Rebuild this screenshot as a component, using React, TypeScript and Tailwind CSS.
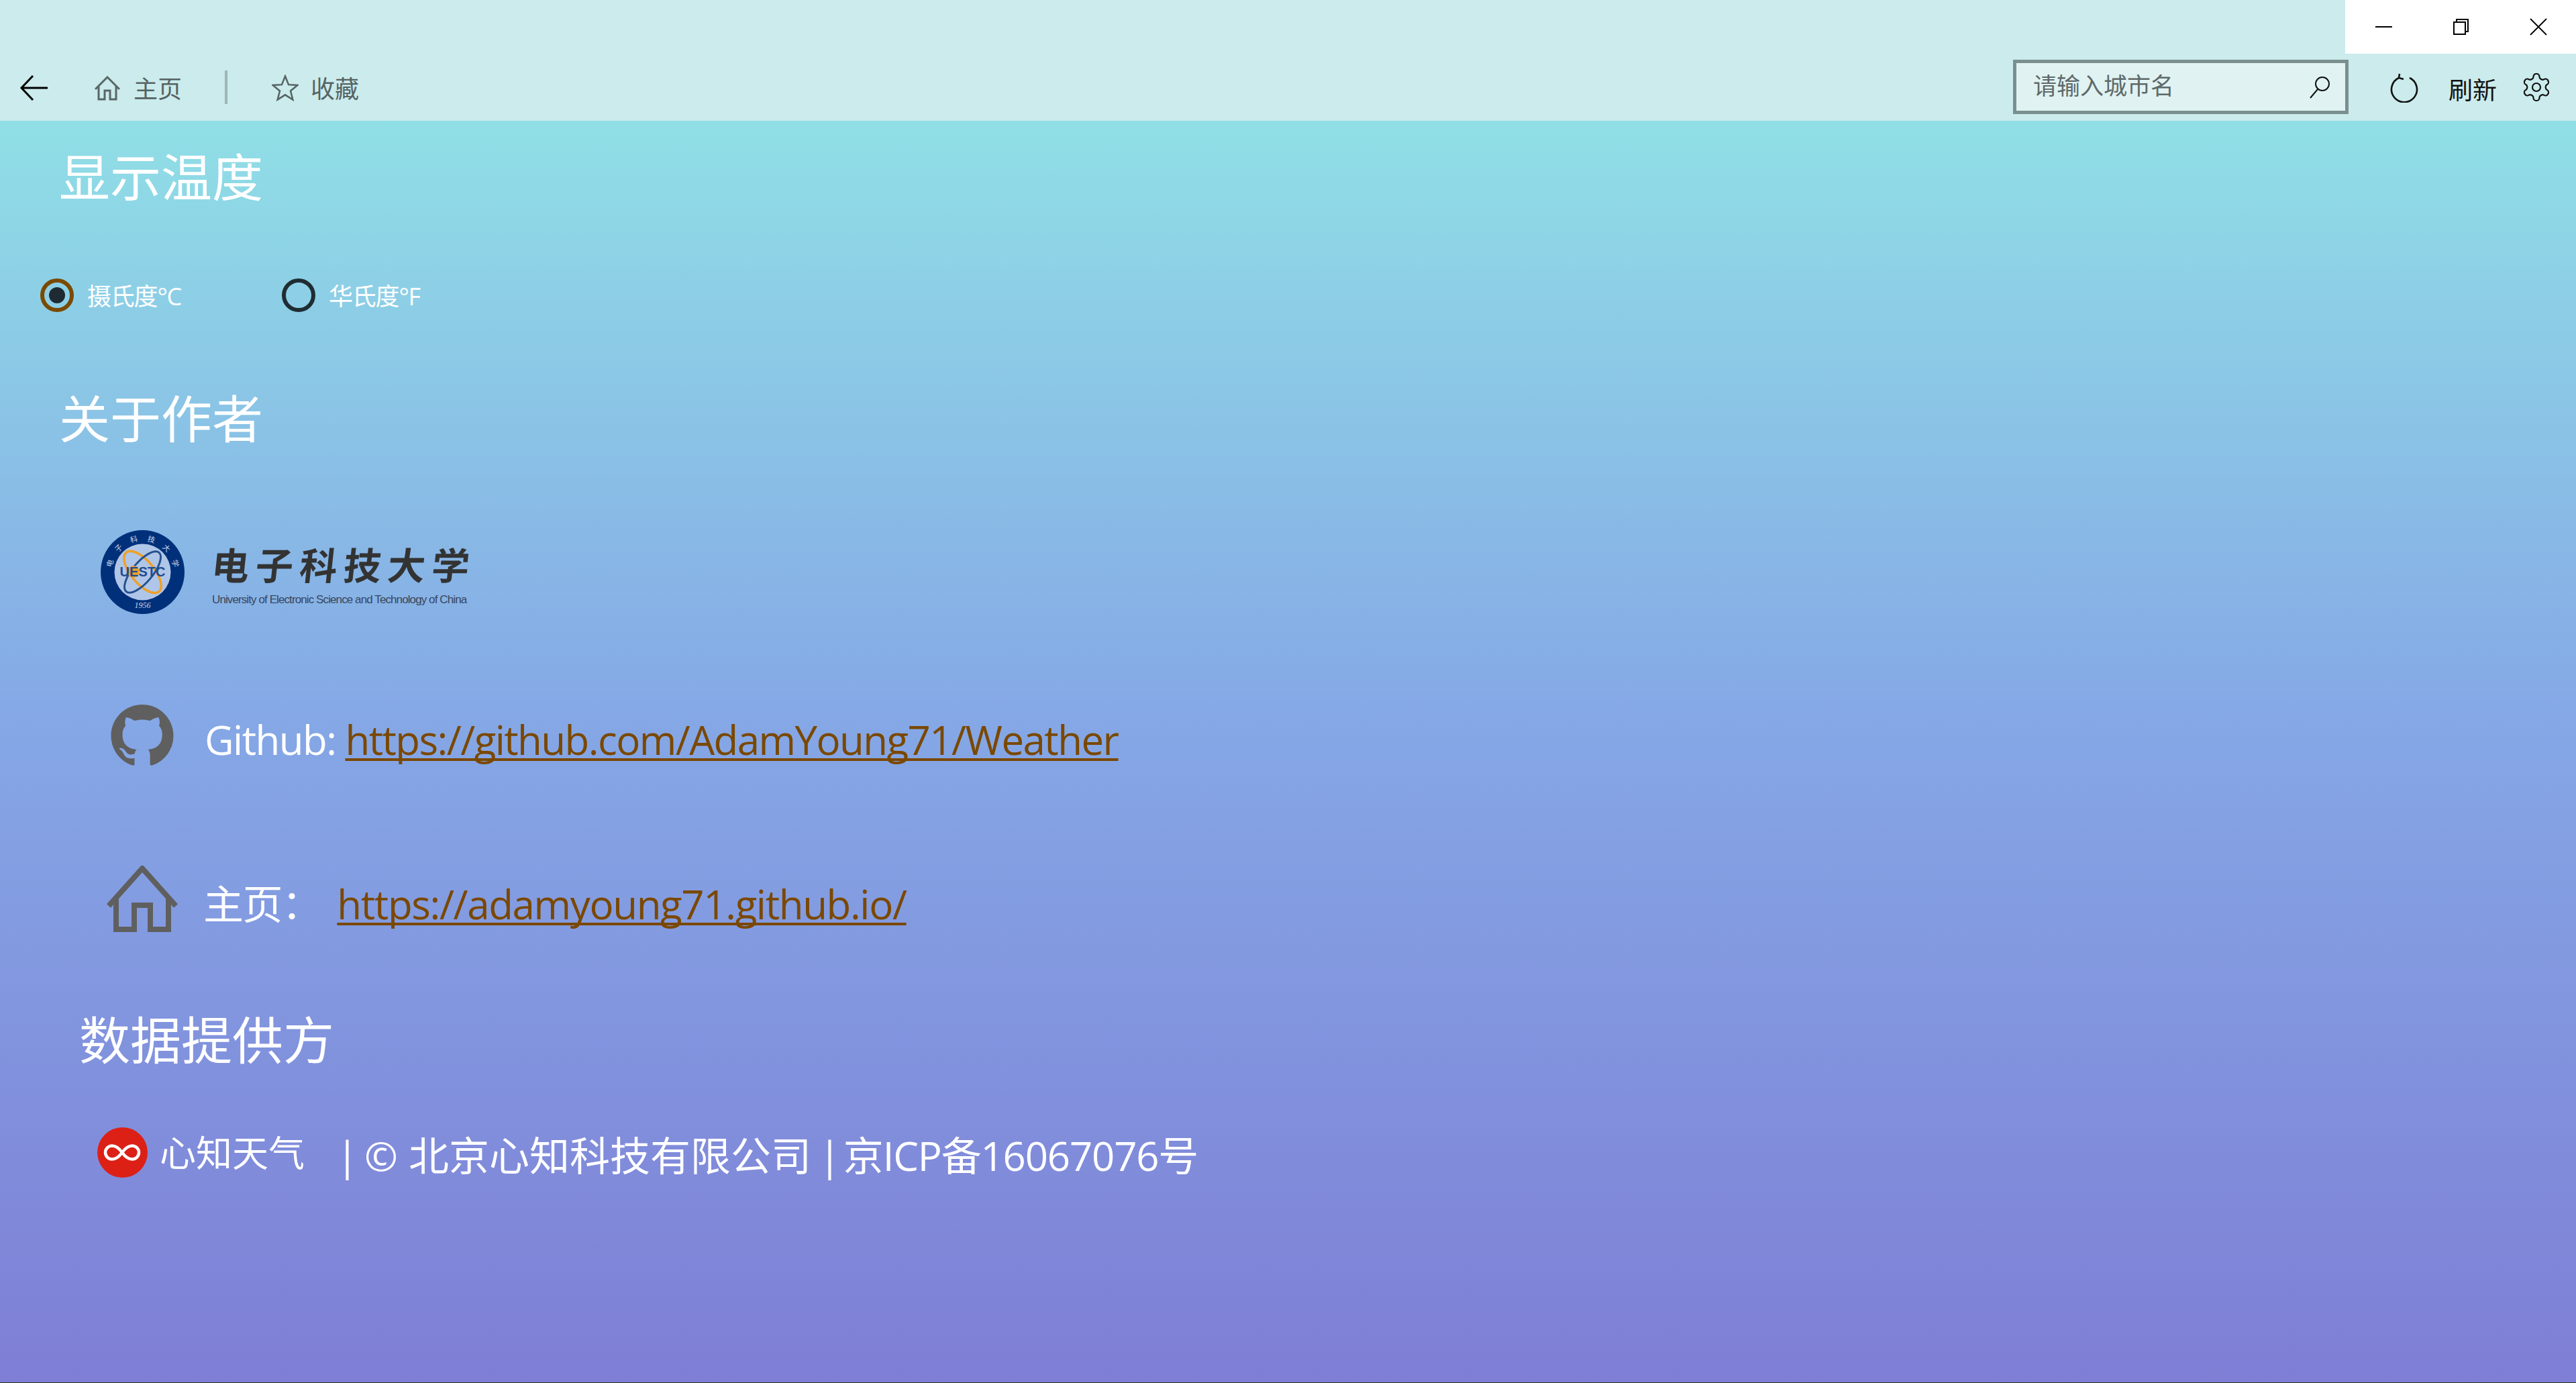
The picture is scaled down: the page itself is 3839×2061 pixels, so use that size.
import React from "react";

const font = { fontFamily: '"Open Sans","Noto Sans CJK SC",sans-serif' };

function Heading({ children, className = "" }: { children: React.ReactNode; className?: string }) {
  return <h2 className={`h-[80px] flex items-center text-[76px] leading-none text-white font-normal ${className}`}>{children}</h2>;
}

function Radio({ label, checked }: { label: string; checked?: boolean }) {
  return (
    <div className="flex items-center w-[360px]">
      <div className={`w-[50px] h-[50px] rounded-full border-[6px] flex items-center justify-center ${checked ? "border-[#7a4a00]" : "border-[#1f2d33]"}`}>
        {checked && <div className="w-[24px] h-[24px] rounded-full bg-[#1f2a33]" />}
      </div>
      <span className="ml-[20px] pt-[4px] text-[36px] leading-none tracking-[-1.2px] text-white font-normal">{label}</span>
    </div>
  );
}

const ring = ["电", "子", "科", "技", "大", "学"];

function Uestc() {
  return (
    <div className="flex items-start h-[125px] ml-[150px]">
      <svg width="125" height="125" viewBox="0 0 125 125" className="shrink-0">
        <circle cx="62.5" cy="62.5" r="62.5" fill="#00307a" />
        <circle cx="62.5" cy="62.5" r="42" fill="#b0c6e8" />
        <ellipse cx="62.5" cy="62.5" rx="38" ry="17" fill="none" stroke="#f0a028" strokeWidth="3.5" transform="rotate(50 62.5 62.5)" />
        <ellipse cx="62.5" cy="62.5" rx="38" ry="15" fill="none" stroke="#25528f" strokeWidth="3" transform="rotate(-50 62.5 62.5)" />
        <circle cx="49" cy="62" r="9" fill="#f0a028" />
        <text x="62.5" y="69" textAnchor="middle" fontSize="20" fontWeight="700" fill="#1f4c8f" fontFamily="Liberation Sans, sans-serif">UESTC</text>
        <text x="62.5" y="116" textAnchor="middle" fontSize="12" fontStyle="italic" fill="#c8d6ea" fontFamily="Liberation Serif, serif">1956</text>
        {ring.map((c, i) => (
          <text key={c} x="62.5" y="16" textAnchor="middle" fontSize="11" fill="#c8d6ea" fontFamily="Noto Sans CJK SC, sans-serif" transform={`rotate(${-75 + i * 30} 62.5 62.5)`}>
            {c}
          </text>
        ))}
      </svg>
      <div className="ml-[41px] flex flex-col">
        <div className="mt-[17px] h-[66px] w-[384px] flex items-center justify-between text-[56px] leading-none font-bold text-[#333] -skew-x-6" style={{ fontFamily: '"Noto Sans CJK SC",sans-serif' }}>
          <span>电</span><span>子</span><span>科</span><span>技</span><span>大</span><span>学</span>
        </div>
        <div className="mt-[11px] text-[17px] leading-[20px] tracking-[-0.9px] text-[#38465c] whitespace-nowrap" style={{ fontFamily: '"Liberation Sans",sans-serif' }}>
          University of Electronic Science and Technology of China
        </div>
      </div>
    </div>
  );
}

export default function App() {
  const link = "text-[#7a4800] underline decoration-[4px] underline-offset-[5px] [text-decoration-skip-ink:none]";
  return (
    <div className="relative w-[3839px] h-[2061px] overflow-hidden flex flex-col" style={font}>
      <header className="h-[180px] shrink-0 bg-[#cbebec] flex items-start pt-[89px]">
        <svg width="44" height="40" viewBox="0 0 44 40" className="ml-[29px] mt-[22px] shrink-0" fill="none" stroke="#000" strokeWidth="3">
          <path d="M42 20H3M20 2L3 20l17 18" />
        </svg>
        <svg width="38" height="38" viewBox="0 0 38 38" className="ml-[68px] mt-[24px] shrink-0" fill="none" stroke="#5a6666" strokeWidth="3">
          <path d="M1 20 19 2l18 18M6 16v19h9V22h8v13h9V16" />
        </svg>
        <span className="ml-[20px] mt-[20px] text-[36px] leading-[48px] text-[#566363] font-normal">主页</span>
        <div className="ml-[64px] mt-[16px] w-[4px] h-[50px] bg-[#9fb5b5]" />
        <svg width="40" height="40" viewBox="0 0 24 24" className="ml-[66px] mt-[22px] shrink-0" fill="none" stroke="#566363" strokeWidth="1.5">
          <path d="M12 1.5l3 7.6 8 .5-6.2 5.1 2 7.8L12 18.2l-6.8 4.3 2-7.8L1 9.6l8-.5z" />
        </svg>
        <span className="ml-[18px] mt-[20px] text-[36px] leading-[48px] text-[#566363] font-normal">收藏</span>
        <div className="ml-auto w-[500px] h-[81px] border-[5px] border-[#7a8f8f] bg-[#e0f3f2] flex items-center pl-[25px] pr-[22px]">
          <span className="pb-[4px] text-[35px] leading-none text-[#5f6a6a] font-normal">请输入城市名</span>
          <svg width="32" height="34" viewBox="0 0 32 34" className="ml-auto" fill="none" stroke="#111" strokeWidth="2">
            <circle cx="20" cy="12" r="10" />
            <path d="M13 20 2 33" />
          </svg>
        </div>
        <svg width="42" height="44" viewBox="0 0 42 44" className="ml-[62px] mt-[20px] shrink-0" fill="none" stroke="#111" strokeWidth="2.6">
          <path d="M29 7a19 19 0 1 1-16 0M13 7l1-6M13 7l7 2" />
        </svg>
        <span className="ml-[45px] mt-[22px] text-[36px] leading-[48px] text-[#111] font-normal">刷新</span>
        <svg width="48" height="48" viewBox="0 0 24 24" className="ml-[35px] mt-[17px] mr-[35px] shrink-0" fill="none" stroke="#111" strokeWidth="1.1" strokeLinejoin="round">
          <path d="M12.22 2h-.44a2 2 0 0 0-2 2v.18a2 2 0 0 1-1 1.73l-.43.25a2 2 0 0 1-2 0l-.15-.08a2 2 0 0 0-2.73.73l-.22.38a2 2 0 0 0 .73 2.73l.15.1a2 2 0 0 1 1 1.72v.51a2 2 0 0 1-1 1.74l-.15.09a2 2 0 0 0-.73 2.73l.22.38a2 2 0 0 0 2.73.73l.15-.08a2 2 0 0 1 2 0l.43.25a2 2 0 0 1 1 1.73V20a2 2 0 0 0 2 2h.44a2 2 0 0 0 2-2v-.18a2 2 0 0 1 1-1.73l.43-.25a2 2 0 0 1 2 0l.15.08a2 2 0 0 0 2.73-.73l.22-.39a2 2 0 0 0-.73-2.73l-.15-.08a2 2 0 0 1-1-1.74v-.5a2 2 0 0 1 1-1.74l.15-.09a2 2 0 0 0 .73-2.73l-.22-.38a2 2 0 0 0-2.73-.73l-.15.08a2 2 0 0 1-2 0l-.43-.25a2 2 0 0 1-1-1.73V4a2 2 0 0 0-2-2z" />
          <circle cx="12" cy="12" r="3" />
        </svg>
      </header>

      <div className="absolute top-0 right-0 w-[344px] h-[80px] bg-white flex items-center">
        <div className="ml-[45px] w-[25px] h-[2px] bg-black" />
        <svg width="26" height="26" viewBox="0 0 26 26" className="ml-[90px]" fill="none" stroke="#000" strokeWidth="2">
          <path d="M6 6V2h17v18h-4M2 6h17v18H2z" />
        </svg>
        <svg width="26" height="26" viewBox="0 0 26 26" className="ml-[89px]" fill="none" stroke="#000" strokeWidth="1.8">
          <path d="M1 1l24 24M25 1 1 25" />
        </svg>
      </div>

      <main className="flex-1 pt-[44px] bg-[linear-gradient(180deg,#90dfe6_0%,#85a8e6_47%,#7e7ed5_100%)]">
        <Heading className="ml-[88px]">显示温度</Heading>
        <div className="mt-[111px] ml-[60px] flex">
          <Radio label="摄氏度°C" checked />
          <Radio label="华氏度°F" />
        </div>
        <Heading className="mt-[119px] ml-[88px]">关于作者</Heading>
        <div className="mt-[126px]">
          <Uestc />
        </div>
        <div className="mt-[135px] h-[93px] flex items-center ml-[165px]">
          <svg width="94" height="93" viewBox="0 0 16 16" fill="#5f5f5f" className="shrink-0">
            <path d="M8 0C3.58 0 0 3.58 0 8c0 3.54 2.29 6.53 5.47 7.59.4.07.55-.17.55-.38 0-.19-.01-.82-.01-1.49-2.01.37-2.53-.49-2.69-.94-.09-.23-.48-.94-.82-1.13-.28-.15-.68-.52-.01-.53.63-.01 1.08.58 1.23.82.72 1.21 1.87.87 2.33.66.07-.52.28-.87.51-1.07-1.78-.2-3.64-.89-3.64-3.95 0-.87.31-1.59.82-2.15-.08-.2-.36-1.02.08-2.12 0 0 .67-.21 2.2.82.64-.18 1.32-.27 2-.27.68 0 1.36.09 2 .27 1.53-1.04 2.2-.82 2.2-.82.44 1.1.16 1.92.08 2.12.51.56.82 1.27.82 2.15 0 3.07-1.87 3.75-3.65 3.95.29.25.54.73.54 1.48 0 1.07-.01 1.93-.01 2.2 0 .21.15.46.55.38A8.013 8.013 0 0 0 16 8c0-4.42-3.58-8-8-8z" />
          </svg>
          <span className="ml-[46px] pt-[10px] text-[60px] leading-none tracking-[-1.55px] text-white font-normal whitespace-nowrap">
            Github: <a className={link}>https://github.com/AdamYoung71/Weather</a>
          </span>
        </div>
        <div className="mt-[147px] h-[99px] flex items-center ml-[159px]">
          <svg width="106" height="99" viewBox="0 0 106 99" fill="none" stroke="#5f5f5f" strokeWidth="8" className="shrink-0">
            <path d="M3 60 53 4l50 56M14 48v47h27V59h24v36h27V48" />
          </svg>
          <span className="ml-[38px] pt-[14px] text-[60px] leading-none tracking-[-1.55px] text-white font-normal whitespace-nowrap">
            主页：<a className={`ml-[24px] tracking-[-1.35px] ${link}`}>https://adamyoung71.github.io/</a>
          </span>
        </div>
        <Heading className="mt-[121px] ml-[118px]">数据提供方</Heading>
        <div className="mt-[90px] h-[75px] flex items-center ml-[145px]">
          <svg width="75" height="75" viewBox="0 0 75 75" className="shrink-0">
            <circle cx="37.5" cy="37.5" r="37.5" fill="#dc2016" />
            <path d="M37 37.5c-5-7-9-10-15-10a10 10 0 0 0 0 20c6 0 10-3 15-10s9-10 15-10a10 10 0 0 1 0 20c-6 0-10-3-15-10z" fill="none" stroke="#fff" strokeWidth="4.5" />
          </svg>
          <span className="ml-[18px] w-[263px] text-[54px] leading-none text-white font-normal whitespace-nowrap">心知天气</span>
          <div className="flex pt-[8px] text-[60px] leading-none text-white font-normal whitespace-nowrap">
            <span>|</span>
            <span className="ml-[9px]">©</span>
            <span className="ml-[16px]">北京心知科技有限公司</span>
            <span className="ml-[11px]">|</span>
            <span className="ml-[4px] tracking-[-1.2px]">京ICP备16067076号</span>
          </div>
        </div>
      </main>
      <div className="h-px shrink-0 bg-[#2a3320]" />
    </div>
  );
}
